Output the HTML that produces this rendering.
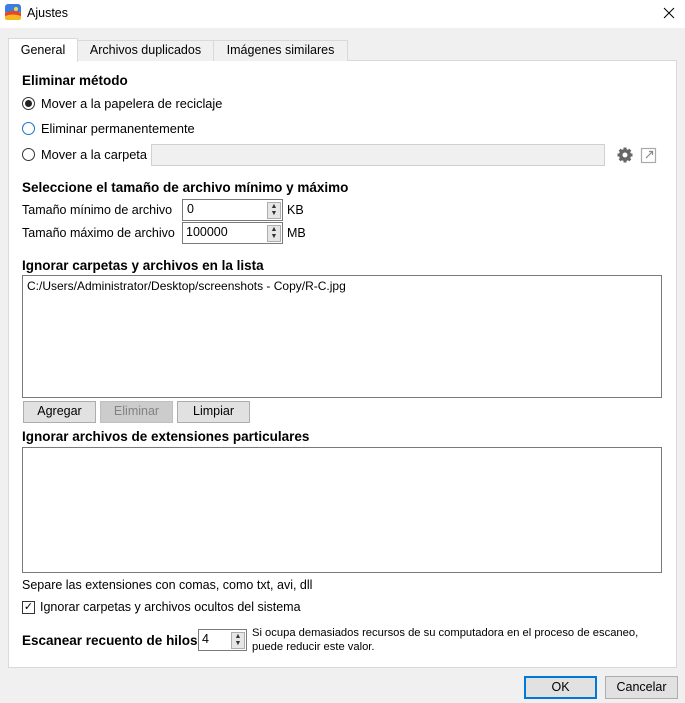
<!DOCTYPE html>
<html><head><meta charset="utf-8"><style>
*{box-sizing:border-box;margin:0;padding:0}
body{width:685px;height:703px;background:#f0f0f0;font-family:"Liberation Sans",sans-serif;font-size:12px;color:#000;position:relative;overflow:hidden}
.a{position:absolute;white-space:nowrap}
.b{font-weight:bold;font-size:13.5px}
.box{position:absolute;background:#fff;border:1px solid #7a7a7a}
.btn{position:absolute;background:#e1e1e1;border:1px solid #adadad;text-align:center;line-height:19px;font-size:12.5px}
.rad{position:absolute;width:13px;height:13px;border:1px solid #333;border-radius:50%;background:#fff}
.spin{position:absolute;right:1px;top:2px;width:14px;height:17px;background:#e6e6e6;border:1px solid #adadad;font-size:7px;line-height:7px;text-align:center;color:#333}
</style></head><body>
<div class="a" style="left:0;top:0;width:685px;height:28px;background:#fff"></div>
<svg class="a" style="left:5px;top:4px" width="16" height="16"><rect x="0" y="0" width="16" height="16" rx="3" fill="#3b7de0"/><rect x="0" y="8" width="16" height="8" rx="2" fill="#f5b820"/><path d="M0 9 Q8 5 16 9 L16 12 Q8 9 0 12Z" fill="#e8452c"/><circle cx="11" cy="5" r="2" fill="#ffd54a"/></svg>
<div class="a" style="left:27px;top:6px;font-size:12.5px">Ajustes</div>
<svg class="a" style="left:663px;top:7px" width="12" height="12"><path d="M1 1L11 11M11 1L1 11" stroke="#000" stroke-width="1"/></svg>

<div class="a" style="left:8px;top:60px;width:669px;height:608px;background:#fff;border:1px solid #d9d9d9"></div>
<div class="a" style="left:77px;top:40px;width:137px;height:21px;background:#f0f0f0;border:1px solid #d9d9d9;border-bottom:none;text-align:center;line-height:19px;font-size:12.5px">Archivos duplicados</div>
<div class="a" style="left:213px;top:40px;width:135px;height:21px;background:#f0f0f0;border:1px solid #d9d9d9;border-bottom:none;text-align:center;line-height:19px;font-size:12.5px">Imágenes similares</div>
<div class="a" style="left:8px;top:38px;width:70px;height:24px;background:#fff;border:1px solid #d9d9d9;border-bottom:none;text-align:center;line-height:22px;font-size:12.5px">General</div>

<div class="a b" style="left:22px;top:73px">Eliminar método</div>
<div class="rad" style="left:22px;top:97px"><div style="position:absolute;left:2px;top:2px;width:7px;height:7px;border-radius:50%;background:#222"></div></div>
<div class="a" style="left:41px;top:96px;font-size:12.8px">Mover a la papelera de reciclaje</div>
<div class="rad" style="left:22px;top:122px;border-color:#1a73d0"></div>
<div class="a" style="left:41px;top:121px;font-size:12.8px">Eliminar permanentemente</div>
<div class="rad" style="left:22px;top:148px"></div>
<div class="a" style="left:41px;top:147px;font-size:12.8px">Mover a la carpeta</div>
<div class="a" style="left:151px;top:144px;width:454px;height:22px;background:#f0f0f0;border:1px solid #d0d0d0"></div>
<svg class="a" style="left:616px;top:146px" width="18" height="18" viewBox="0 0 18 18"><g fill="#666"><circle cx="9" cy="9" r="6"/><rect x="7.5" y="1.5" width="3" height="15"/><rect x="1.5" y="7.5" width="15" height="3"/><rect x="7.5" y="1.5" width="3" height="15" transform="rotate(45 9 9)"/><rect x="7.5" y="1.5" width="3" height="15" transform="rotate(-45 9 9)"/></g><circle cx="9" cy="9" r="2.5" fill="#fff"/></svg>
<svg class="a" style="left:640px;top:146px" width="18" height="18" viewBox="0 0 18 18"><rect x="1.5" y="2.5" width="14" height="14" fill="none" stroke="#aaa" stroke-width="1.2"/><path d="M6 12 L12 6 M9 5.5 H12.5 V9" fill="none" stroke="#888" stroke-width="1.2"/></svg>

<div class="a b" style="left:22px;top:180px">Seleccione el tamaño de archivo mínimo y máximo</div>
<div class="a" style="left:22px;top:203px;font-size:12.5px">Tamaño mínimo de archivo</div>
<div class="box" style="left:182px;top:199px;width:101px;height:22px;padding:2px 4px;font-size:12.5px">0<div class="spin">▲<br>▼</div></div>
<div class="a" style="left:287px;top:203px;font-size:12.5px">KB</div>
<div class="a" style="left:22px;top:226px;font-size:12.5px">Tamaño máximo de archivo</div>
<div class="box" style="left:182px;top:222px;width:101px;height:22px;padding:2px 3px;font-size:12.5px">100000<div class="spin">▲<br>▼</div></div>
<div class="a" style="left:287px;top:226px;font-size:12.5px">MB</div>

<div class="a b" style="left:22px;top:258px">Ignorar carpetas y archivos en la lista</div>
<div class="box" style="left:22px;top:275px;width:640px;height:123px;padding:3px 4px;font-size:12px">C:/Users/Administrator/Desktop/screenshots - Copy/R-C.jpg</div>
<div class="btn" style="left:23px;top:401px;width:73px;height:22px">Agregar</div>
<div class="btn" style="left:100px;top:401px;width:73px;height:22px;background:#cccccc;border-color:#bfbfbf;color:#838383">Eliminar</div>
<div class="btn" style="left:177px;top:401px;width:73px;height:22px">Limpiar</div>

<div class="a b" style="left:22px;top:429px">Ignorar archivos de extensiones particulares</div>
<div class="box" style="left:22px;top:447px;width:640px;height:126px"></div>
<div class="a" style="left:22px;top:578px;font-size:12.5px">Separe las extensiones con comas, como txt, avi, dll</div>
<div class="a" style="left:22px;top:601px;width:13px;height:13px;border:1px solid #333;background:#fff;font-size:11px;line-height:11px;text-align:center">✓</div>
<div class="a" style="left:40px;top:600px;font-size:12.5px">Ignorar carpetas y archivos ocultos del sistema</div>

<div class="a b" style="left:22px;top:633px">Escanear recuento de hilos</div>
<div class="box" style="left:198px;top:629px;width:49px;height:22px;padding:2px 3px;font-size:12.5px">4<div class="spin">▲<br>▼</div></div>
<div class="a" style="left:252px;top:626px;font-size:11.2px;line-height:14px">Si ocupa demasiados recursos de su computadora en el proceso de escaneo,<br>puede reducir este valor.</div>

<div class="btn" style="left:524px;top:676px;width:73px;height:23px;border:2px solid #0078d7;line-height:19px">OK</div>
<div class="btn" style="left:605px;top:676px;width:73px;height:23px;line-height:21px">Cancelar</div>
</body></html>
